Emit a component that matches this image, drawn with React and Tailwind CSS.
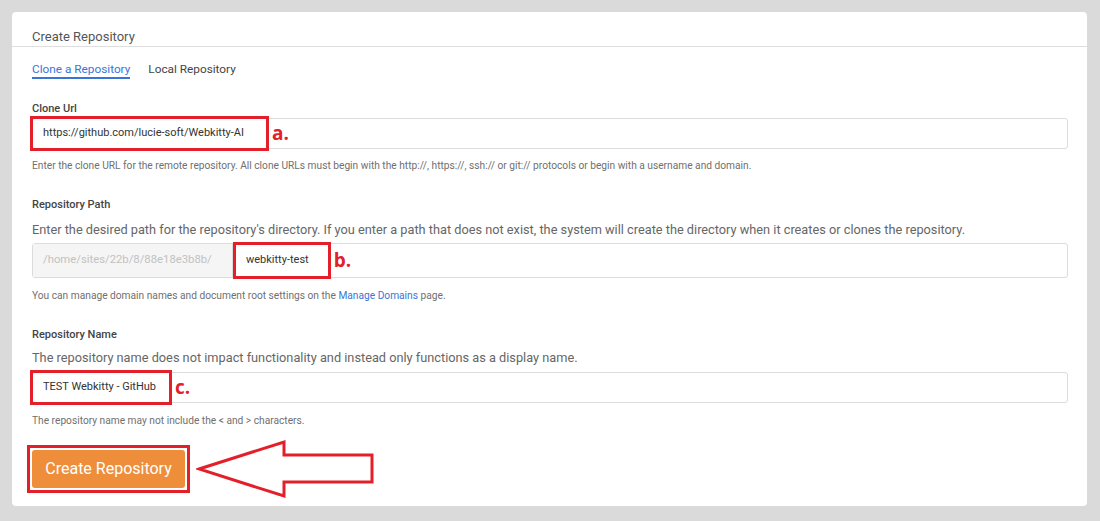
import { useState } from 'react'

const RED = 'ring-[3px] ring-[#e3202a]'

// Hollow left-pointing arrow drawn next to the submit button.
function PointerArrow() {
  return (
    <svg width="180" height="60" viewBox="0 0 180 60" className="ml-[6px]">
      <polygon
        points="3,30 88,3 88,16 176,16 176,43 88,43 88,57"
        fill="#fff"
        stroke="#e3202a"
        strokeWidth="3"
        strokeLinejoin="miter"
      />
    </svg>
  )
}

function Mark({ children }) {
  return (
    <span className="ml-[6px] text-[19px] leading-none font-bold text-[#e3202a]" style={{ fontFamily: '"Open Sans", sans-serif' }}>
      {children}
    </span>
  )
}

export default function App() {
  const [tab, setTab] = useState('clone')

  return (
    <div className="min-h-[521px] w-[1100px] bg-[#dadada] pt-[12px] pl-[12px]" style={{ fontFamily: 'Roboto, "Liberation Sans", sans-serif' }}>
      <div className="w-[1075px] h-[494px] bg-white rounded-[4px]">
        <div className="h-[35px] pt-[17px] pl-5 border-b border-[#dedede] text-[13px] leading-[16px] text-[#555]">Create Repository</div>

        <div className="pl-5 pr-[19px]">
          <div className="flex gap-[18px] pt-[15px] text-[11.8px] leading-[14px]">
            <button onClick={() => setTab('clone')} className={`pb-px border-b-2 ${tab === 'clone' ? 'text-[#3a74d8] border-[#3a74d8]' : 'text-[#444] border-transparent'}`}>Clone a Repository</button>
            <button onClick={() => setTab('local')} className={`pb-px border-b-2 ${tab === 'local' ? 'text-[#3a74d8] border-[#3a74d8]' : 'text-[#444] border-transparent'}`}>Local Repository</button>
          </div>

          {/* Clone URL */}
          <div className="mt-[23px] text-[11px] leading-[14px] font-medium text-[#444]">Clone Url</div>
          <div className="mt-[2px] h-[31px] flex items-center border border-[#dcdcdc] rounded-[3px]">
            <span className={`h-full flex items-center pl-[10px] pr-[22px] text-[11px] text-[#333] ${RED}`}>https://github.com/lucie-soft/Webkitty-AI</span>
            <Mark>a.</Mark>
          </div>
          <div className="mt-[10px] text-[10.2px] leading-[13px] text-[#707070]">Enter the clone URL for the remote repository. All clone URLs must begin with the http://, https://, ssh:// or git:// protocols or begin with a username and domain.</div>

          {/* Repository path */}
          <div className="mt-[26px] text-[11px] leading-[14px] font-medium text-[#444]">Repository Path</div>
          <div className="mt-[9px] text-[12.75px] leading-[18px] text-[#666]">Enter the desired path for the repository's directory. If you enter a path that does not exist, the system will create the directory when it creates or clones the repository.</div>
          <div className="mt-[4px] h-[35px] flex items-center border border-[#dcdcdc] rounded-[3px]">
            <span className="h-full flex items-center w-[200px] pl-[10px] bg-[#f5f5f5] border-r border-[#dcdcdc] text-[11.3px] text-[#c2c2c2]">/home/sites/22b/8/88e18e3b8b/</span>
            <span className={`h-[31px] flex items-center ml-[3px] pl-[10px] pr-[19px] text-[11px] text-[#333] ${RED}`}>webkitty-test</span>
            <Mark>b.</Mark>
          </div>
          <div className="mt-[11px] text-[10.2px] leading-[13px] text-[#707070]">
            You can manage domain names and document root settings on the <a className="text-[#3a74d8]">Manage Domains</a> page.
          </div>

          {/* Repository name */}
          <div className="mt-[26px] text-[11px] leading-[14px] font-medium text-[#444]">Repository Name</div>
          <div className="mt-[7px] text-[12.75px] leading-[18px] text-[#666]">The repository name does not impact functionality and instead only functions as a display name.</div>
          <div className="mt-[5px] h-[31px] flex items-center border border-[#dcdcdc] rounded-[3px]">
            <span className={`h-full flex items-center pl-[10px] pr-[13px] text-[11px] text-[#333] ${RED}`}>TEST Webkitty - GitHub</span>
            <Mark>c.</Mark>
          </div>
          <div className="mt-[11px] text-[10.2px] leading-[13px] text-[#707070]">The repository name may not include the &lt; and &gt; characters.</div>

          <div className="mt-[12px] flex items-center">
            <div className="ml-[-5px] p-[2px] border-[3px] border-[#e3202a]">
              <button className="w-[153px] h-[38px] rounded-[3px] bg-[#ee8e3a] text-white text-[16px]">Create Repository</button>
            </div>
            <PointerArrow />
          </div>
        </div>
      </div>
    </div>
  )
}
